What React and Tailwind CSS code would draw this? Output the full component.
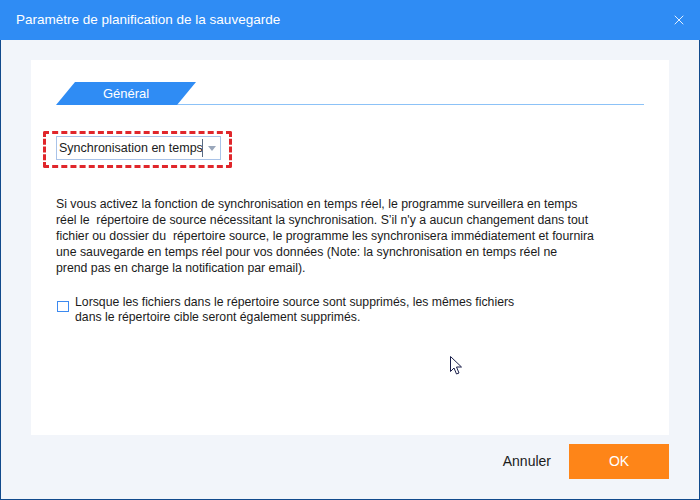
import { X } from 'lucide-react';

const font = { fontFamily: '"Liberation Sans", Arial, sans-serif' };

export default function App() {
    return (
        <div className="w-[700px] h-[500px] flex flex-col border-x border-b border-[#124a8c] bg-[#f2f5fa] text-[#1b1b1b]" style={font}>
            {/* Title bar */}
            <div className="h-10 shrink-0 -mx-px bg-[#2f8cf4] flex items-center justify-between pl-4 pr-[13px] text-white">
                <span className="text-[13.5px]">Paramètre de planification de la sauvegarde</span>
                <X className="w-[16px] h-[16px]" strokeWidth={1.3} />
            </div>

            {/* Body */}
            <div className="flex-1 flex flex-col px-[30px] pt-5">
                <div className="relative h-[375px] bg-white px-[25px] pt-[21px]">
                    {/* Tab header */}
                    <div className="flex items-end h-[24px]">
                        <div className="w-[140px] h-[23px] shrink-0 bg-[#2f8cf4] text-white text-[13px] flex items-center justify-center [clip-path:polygon(19px_0,140px_0,121px_23px,0_23px)]">
                            Général
                        </div>
                        <div className="flex-1 -ml-[20px] border-b border-[#8cc2f7]" />
                    </div>

                    {/* Mode select */}
                    <div className="relative mt-[31px] w-[165px]">
                        <div className="h-[24px] border border-[#a9c3e8] flex items-center text-[12.5px]">
                            <span className="pl-[2px] flex-1 whitespace-nowrap overflow-hidden">Synchronisation en temps</span>
                            <div className="w-px h-[18px] bg-[#5a6a80]" />
                            <div className="w-[17px] flex justify-center">
                                <svg width="8" height="5" viewBox="0 0 8 5"><path d="M0 0h8L4 5z" fill="#9aa7bb" /></svg>
                            </div>
                        </div>
                        <div className="absolute -left-[13px] -top-[5px] w-[189px] h-[37px] border-[3px] border-dashed border-[#e0262b] rounded-[2px]" />
                    </div>

                    {/* Description */}
                    <p className="mt-[36px] text-[12.3px] leading-[16px] whitespace-nowrap">
                        Si vous activez la fonction de synchronisation en temps réel, le programme surveillera en temps<br />
                        réel le&nbsp; répertoire de source nécessitant la synchronisation. S’il n'y a aucun changement dans tout<br />
                        fichier ou dossier du&nbsp; répertoire source, le programme les synchronisera immédiatement et fournira<br />
                        une sauvegarde en temps réel pour vos données (Note: la synchronisation en temps réel ne<br />
                        prend pas en charge la notification par email).
                    </p>

                    {/* Checkbox */}
                    <label className="mt-[19px] flex items-start gap-[6px] text-[12.25px] leading-[15px]">
                        <span className="mt-[6px] ml-px w-[12px] h-[11px] border-[1.5px] border-[#3d8af0] shrink-0" />
                        <span className="whitespace-nowrap">
                            Lorsque les fichiers dans le répertoire source sont supprimés, les mêmes fichiers<br />
                            dans le répertoire cible seront également supprimés.
                        </span>
                    </label>

                    {/* Mouse pointer */}
                    <svg className="absolute left-[419px] top-[296px]" width="12" height="19" viewBox="0 0 12 19">
                        <path d="M0.5 0.5v15l3.5-3.5 2.5 6 2.5-1-2.5-6h5z" fill="#fff" stroke="#1a1f4a" strokeWidth="1" strokeLinejoin="round" />
                    </svg>
                </div>

                {/* Footer */}
                <div className="mt-[9px] flex justify-end items-center">
                    <button className="text-[14px] text-[#1b1b1b] mr-[18px]">Annuler</button>
                    <button className="w-[100px] h-[35px] bg-[#fe8518] text-white text-[14px]">OK</button>
                </div>
            </div>
        </div>
    );
}
